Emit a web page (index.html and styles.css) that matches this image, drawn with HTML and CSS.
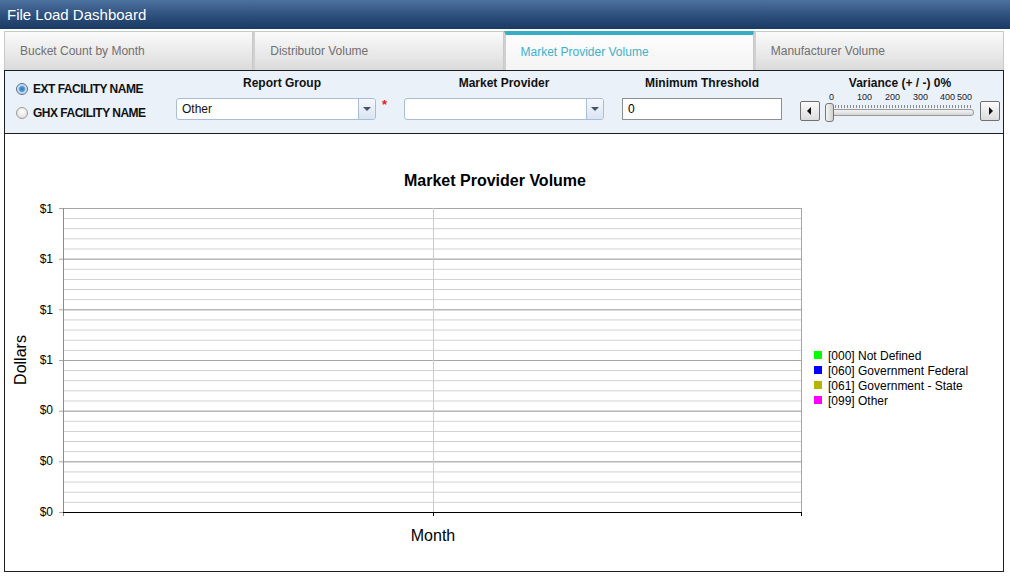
FILE: index.html
```html
<!DOCTYPE html>
<html lang="en">
<head>
    <meta charset="UTF-8">
    <title>File Load Dashboard</title>
    <link rel="stylesheet" href="styles.css">
</head>
<body>
    <div class="titlebar">File Load Dashboard</div>

    <div class="main">
        <div class="tabs">
            <div class="tab">Bucket Count by Month</div>
            <div class="tab">Distributor Volume</div>
            <div class="tab active">Market Provider Volume</div>
            <div class="tab">Manufacturer Volume</div>
        </div>

        <!-- filter bar -->
        <div class="filters">
            <div class="radios">
                <label class="radio checked"><span class="dot"></span>EXT FACILITY NAME</label>
                <label class="radio"><span class="dot"></span>GHX FACILITY NAME</label>
            </div>
            <div class="field report">
                <div class="field-label">Report Group</div>
                <div class="row">
                    <div class="combo"><span class="combo-text">Other</span><span class="combo-btn"></span></div>
                    <span class="req">*</span>
                </div>
            </div>
            <div class="field provider">
                <div class="field-label">Market Provider</div>
                <div class="combo"><span class="combo-text"></span><span class="combo-btn"></span></div>
            </div>
            <div class="field threshold">
                <div class="field-label">Minimum Threshold</div>
                <div class="textbox">0</div>
            </div>
            <div class="field variance">
                <div class="field-label">Variance (+ / -) 0%</div>
                <div class="slider">
                    <span class="step left"></span>
                    <div class="track">
                        <div class="scale">
                            <span class="n0">0</span>
                            <span class="n1">100</span>
                            <span class="n2">200</span>
                            <span class="n3">300</span>
                            <span class="n4">400</span>
                            <span class="n5">500</span>
                        </div>
                        <div class="ticks"></div>
                        <div class="groove"></div>
                        <div class="thumb"></div>
                    </div>
                    <span class="step right"></span>
                </div>
            </div>
        </div>

        <!-- chart -->
        <div class="chart">
            <svg class="plot" width="998" height="437" viewBox="0 0 998 437">
                <defs>
                    <pattern id="minor" x="58" y="74" width="739" height="10.133" patternUnits="userSpaceOnUse">
                        <line x1="0" y1="0.5" x2="739" y2="0.5" stroke="#cdcdcd" stroke-width="1"/>
                    </pattern>
                </defs>
                <text x="490" y="52" class="chart-title" text-anchor="middle">Market Provider Volume</text>

                <rect x="58" y="74" width="739" height="304" fill="url(#minor)"/>
                <g stroke="#a6a6a6" stroke-width="1">
                    <line x1="54" y1="74.5" x2="797" y2="74.5"/>
                    <line x1="54" y1="125.2" x2="797" y2="125.2"/>
                    <line x1="54" y1="175.8" x2="797" y2="175.8"/>
                    <line x1="54" y1="226.5" x2="797" y2="226.5"/>
                    <line x1="54" y1="277.2" x2="797" y2="277.2"/>
                    <line x1="54" y1="327.8" x2="797" y2="327.8"/>
                    <line x1="54" y1="378.5" x2="58" y2="378.5"/>
                </g>
                <line x1="428.5" y1="74" x2="428.5" y2="378" stroke="#cdcdcd"/>
                <line x1="796.5" y1="74" x2="796.5" y2="378" stroke="#a6a6a6"/>
                <line x1="58.5" y1="74" x2="58.5" y2="382" stroke="#8c8c8c"/>
                <line x1="58" y1="378.5" x2="797" y2="378.5" stroke="#000"/>
                <g stroke="#000">
                    <line x1="428.5" y1="378" x2="428.5" y2="382"/>
                    <line x1="796.5" y1="378" x2="796.5" y2="382"/>
                </g>

                <g class="tick-label" text-anchor="end">
                    <text x="48" y="79">$1</text>
                    <text x="48" y="129">$1</text>
                    <text x="48" y="180">$1</text>
                    <text x="48" y="230">$1</text>
                    <text x="48" y="280">$0</text>
                    <text x="48" y="331">$0</text>
                    <text x="48" y="382">$0</text>
                </g>

                <text class="axis-title" transform="translate(21 226) rotate(-90)" text-anchor="middle">Dollars</text>
                <text class="axis-title" x="428" y="407" text-anchor="middle">Month</text>

                <g class="legend">
                    <rect x="809" y="217" width="8" height="8" fill="#00ff00"/>
                    <text x="823" y="226">[000] Not Defined</text>
                    <rect x="809" y="232" width="8" height="8" fill="#0000ff"/>
                    <text x="823" y="241">[060] Government Federal</text>
                    <rect x="809" y="247" width="8" height="8" fill="#b5b500"/>
                    <text x="823" y="256">[061] Government - State</text>
                    <rect x="809" y="262" width="8" height="8" fill="#ff00ff"/>
                    <text x="823" y="271">[099] Other</text>
                </g>
            </svg>
        </div>
    </div>
</body>
</html>
```

FILE: styles.css
```css
/* File Load Dashboard */
body {
    margin: 0;
    padding: 0;
    font-family: "Liberation Sans", Arial, sans-serif;
    background: #fff;
    color: #000;
}
.titlebar {
    height: 29px;
    line-height: 30px;
    padding-left: 7px;
    font-size: 15px;
    color: #fff;
    background: linear-gradient(#4d71a0, #2a4c78 60%, #1b3a62);
}
.main {
    margin: 2px 6px 0 4px;
}

/* tabs */
.tabs {
    display: flex;
    height: 39px;
}
.tab {
    flex: 1;
    box-sizing: border-box;
    padding-left: 15px;
    line-height: 39px;
    font-size: 12px;
    color: #707070;
    background: linear-gradient(#fafafa, #e8e8e8 60%, #dadada);
    border: 1px solid #c9c9c9;
    border-bottom: none;
    border-left: 2px solid #d0d0d0;
}
.tab:first-child {
    border-left: 1px solid #c9c9c9;
}
.tab.active {
    background: linear-gradient(#fdfdfd, #f4f4f4);
    color: #3eb1c8;
    border-top: 4px solid #36adc2;
    line-height: 35px;
}

/* filter bar */
.filters {
    display: flex;
    height: 62px;
    border: 1px solid #1e1e1e;
    background: #eaf1f9;
}
.radios {
    width: 171px;
    padding: 6px 0 0 11px;
    box-sizing: border-box;
}
.radio {
    display: flex;
    align-items: center;
    height: 24px;
    font-size: 12px;
    letter-spacing: -0.5px;
    font-weight: bold;
    color: #111;
}
.dot {
    width: 10px;
    height: 10px;
    margin-right: 5px;
    border-radius: 50%;
    border: 1px solid #9a9a9a;
    background: radial-gradient(circle at 50% 35%, #ffffff, #d8d8d8);
    box-sizing: content-box;
}
.radio.checked .dot {
    border-color: #55708a;
    background: radial-gradient(circle, #2a79c6 0, #4a9be0 2.5px, #bcd3e6 3.5px, #e9eef3 6px);
}
.field {
    display: flex;
    flex-direction: column;
}
.field-label {
    height: 22px;
    padding-top: 5px;
    font-size: 12px;
    font-weight: bold;
    text-align: center;
    color: #111;
}
.row {
    display: flex;
}
.report {
    width: 228px;
}
.report .field-label {
    width: 212px;
}
.provider {
    width: 218px;
}
.provider .field-label {
    width: 200px;
}
.threshold {
    width: 178px;
}
.threshold .field-label {
    width: 160px;
}
.variance {
    width: 200px;
}
.combo {
    display: flex;
    width: 200px;
    height: 22px;
    box-sizing: border-box;
    border: 1px solid #a9bdd4;
    border-radius: 3px;
    background: #fff;
}
.combo-text {
    flex: 1;
    padding-left: 5px;
    line-height: 20px;
    font-size: 12px;
    color: #111;
}
.combo-btn {
    width: 16px;
    position: relative;
    border-left: 1px solid #a9bdd4;
    background: linear-gradient(#f5f8fc, #d9e4f1);
    border-radius: 0 2px 2px 0;
}
.combo-btn::after {
    content: "";
    position: absolute;
    left: 4px;
    top: 8px;
    border-left: 4px solid transparent;
    border-right: 4px solid transparent;
    border-top: 4px solid #44546a;
}
.req {
    margin-left: 6px;
    color: #e31b1b;
    font-size: 13px;
    font-weight: bold;
    line-height: 14px;
}
.textbox {
    width: 160px;
    height: 22px;
    box-sizing: border-box;
    border: 1px solid #8f8f8f;
    background: #fff;
    padding-left: 5px;
    line-height: 20px;
    font-size: 12px;
}

/* slider */
.slider {
    display: flex;
    align-items: flex-end;
    height: 23px;
}
.step {
    width: 18px;
    height: 18px;
    position: relative;
    border: 1px solid #707070;
    border-radius: 2px;
    background: linear-gradient(#fbfbfb, #dcdcdc);
}
.step::after {
    content: "";
    position: absolute;
    top: 5px;
    border-top: 4px solid transparent;
    border-bottom: 4px solid transparent;
}
.step.left::after {
    left: 6px;
    border-right: 4px solid #111;
}
.step.right::after {
    left: 8px;
    border-left: 4px solid #111;
}
.track {
    flex: 1;
    position: relative;
    height: 23px;
    margin: 0 6px;
}
.scale {
    position: absolute;
    top: -6px;
    left: 0;
    right: 0;
    font-size: 9px;
    color: #222;
    font-family: "Liberation Sans", Arial, sans-serif;
}
.scale span {
    position: absolute;
}
.n0 { left: 3px; }
.n1 { left: 31px; }
.n2 { left: 59px; }
.n3 { left: 87px; }
.n4 { left: 114px; }
.n5 { left: 131px; }
.ticks {
    position: absolute;
    left: 3px;
    right: 2px;
    top: 7px;
    height: 3px;
    background: repeating-linear-gradient(90deg, #8a8a8a 0 1px, transparent 1px 3px);
}
.groove {
    position: absolute;
    left: 0;
    right: 0;
    top: 11px;
    height: 5px;
    border: 1px solid #999;
    border-radius: 3px;
    background: linear-gradient(#f4f4f4, #d4d4d4);
}
.thumb {
    position: absolute;
    left: -1px;
    top: 5px;
    width: 7px;
    height: 17px;
    border: 1px solid #777;
    border-radius: 3px;
    background: linear-gradient(90deg, #f6f6f6, #cfcfcf);
}

/* chart */
.chart {
    height: 437px;
    border: 1px solid #1e1e1e;
    border-top: none;
    background: #fff;
}
.plot {
    display: block;
}
.chart-title {
    font-size: 16px;
    font-weight: bold;
    font-family: "Liberation Sans", Arial, sans-serif;
}
.tick-label text {
    font-size: 12px;
    font-family: "Liberation Sans", Arial, sans-serif;
}
.axis-title {
    font-size: 16px;
    font-family: "Liberation Sans", Arial, sans-serif;
}
.legend text {
    font-size: 12px;
    font-family: "Liberation Sans", Arial, sans-serif;
}
```
